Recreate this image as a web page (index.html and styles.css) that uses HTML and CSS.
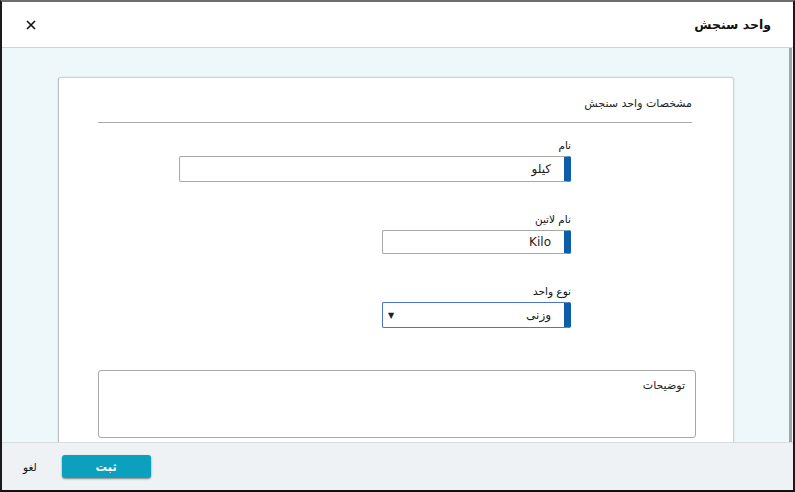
FILE: index.html
```html
<!DOCTYPE html>
<html lang="fa" dir="rtl">
<head>
<meta charset="utf-8">
<title>واحد سنجش</title>
<link rel="stylesheet" href="styles.css">
</head>
<body>
<div class="modal">
  <header class="modal-header">
    <h1 class="modal-title">واحد سنجش</h1>
    <button class="close-btn" aria-label="close">
      <svg width="10" height="10" viewBox="0 0 10 10"><path d="M1 1 L9 9 M9 1 L1 9" stroke="#111" stroke-width="1.6" fill="none"/></svg>
    </button>
  </header>
  <div class="modal-body">
    <div class="scrollbar"></div>
    <div class="scroll-area">
      <div class="card">
        <h2 class="section-title">مشخصات واحد سنجش</h2>
        <hr class="divider">
        <div class="fields">
          <div class="field">
            <label class="field-label">نام</label>
            <div class="input w-wide h26">کیلو</div>
          </div>
          <div class="field">
            <label class="field-label">نام لاتین</label>
            <div class="input w-narrow h24">Kilo</div>
          </div>
          <div class="field">
            <label class="field-label">نوع واحد</label>
            <div class="input select w-narrow h26"><span>وزنی</span><span class="arrow">▼</span></div>
          </div>
        </div>
        <div class="textarea">توضیحات</div>
      </div>
    </div>
  </div>
  <footer class="modal-footer">
    <button class="btn-save">ثبت</button>
    <button class="btn-cancel">لغو</button>
  </footer>
</div>
</body>
</html>
```
FILE: styles.css
```css
* { box-sizing: border-box; }
html, body { margin: 0; padding: 0; }
body {
  width: 795px;
  height: 492px;
  overflow: hidden;
  font-family: "DejaVu Sans", "Noto Sans", sans-serif;
  background: #ffffff;
  color: #111;
}
.modal {
  width: 795px;
  height: 492px;
  display: flex;
  flex-direction: column;
  border-top: 2px solid #6e6e6e;
  border-left: 2px solid #1a1a1a;
  border-right: 2px solid #1a1a1a;
  border-bottom: 2px solid #111;
  background: #fff;
}
.modal-header {
  height: 46px;
  flex: none;
  display: flex;
  align-items: center;
  justify-content: space-between;
  padding: 0 22px 0 24px;
  border-bottom: 1px solid #d2d2d2;
  background: #fff;
}
.modal-title {
  margin: 0;
  font-size: 12.5px;
  font-weight: bold;
  color: #111;
}
.close-btn {
  border: 0;
  background: none;
  padding: 0;
  width: 10px;
  height: 10px;
  display: flex;
}
.modal-body {
  flex: 1;
  display: flex;
  min-height: 0;
  background: #eef7fa;
}
.scrollbar {
  width: 4px;
  flex: none;
  background: #f4f8fa;
  border-left: 3px solid #a3a6a8;
}
.scroll-area {
  flex: 1;
  overflow: hidden;
  padding: 29px 55px 0 56px;
}
.card {
  background: #fff;
  border: 1px solid #cfd3d6;
  border-left-color: #b9bcbe;
  border-radius: 3px 3px 0 0;
  box-shadow: 0 0 2px rgba(0,0,0,0.12);
  padding: 18px 37px 40px 39px;
  height: 420px;
}
.section-title {
  margin: 0 4px 0 0;
  font-size: 11px;
  font-weight: normal;
  line-height: 16px;
  color: #222;
}
.divider {
  margin: 10px 4px 0 0;
  border: 0;
  border-top: 1px solid #a9a9a9;
  height: 0;
}
.fields {
  margin-right: 125px;
  padding-top: 15px;
  display: flex;
  flex-direction: column;
  gap: 30px;
}
.field {
  display: flex;
  flex-direction: column;
  align-items: flex-start;
}
.field-label {
  font-size: 10.5px;
  line-height: 14px;
  margin-bottom: 4px;
  color: #111;
}
.input {
  display: flex;
  align-items: center;
  justify-content: space-between;
  border: 1px solid #a8a8a8;
  border-right: 7px solid #0d5ea9;
  border-radius: 2px;
  padding: 0 13px 0 5px;
  font-size: 12px;
  color: #1a1a1a;
  background: #fff;
}
.select { border-color: #4b77c4; border-right-color: #0d5ea9; }
.arrow { font-size: 8px; color: #222; }
.w-wide { width: 392px; }
.w-narrow { width: 189px; }
.h26 { height: 26px; }
.h24 { height: 24px; }
.textarea {
  margin-top: 42px;
  height: 68px;
  border: 1px solid #a8a8a8;
  border-radius: 3px;
  padding: 7px 10px;
  font-size: 11px;
  line-height: 16px;
  color: #222;
}
.modal-footer {
  height: 48px;
  flex: none;
  display: flex;
  align-items: center;
  justify-content: flex-end;
  gap: 25px;
  padding-left: 21px;
  border-top: 1px solid #d8dde0;
  background: #eef2f5;
}
.btn-save {
  width: 89px;
  height: 23px;
  border: 0;
  border-radius: 3px;
  background: #0aa0be;
  box-shadow: 0 1px 2px rgba(0,0,0,0.45);
  color: #fff;
  font-family: "DejaVu Sans", sans-serif;
  font-weight: bold;
  font-size: 11.5px;
}
.btn-cancel {
  border: 0;
  background: none;
  padding: 0;
  font-family: "DejaVu Sans", sans-serif;
  font-size: 10.5px;
  color: #111;
}
```
